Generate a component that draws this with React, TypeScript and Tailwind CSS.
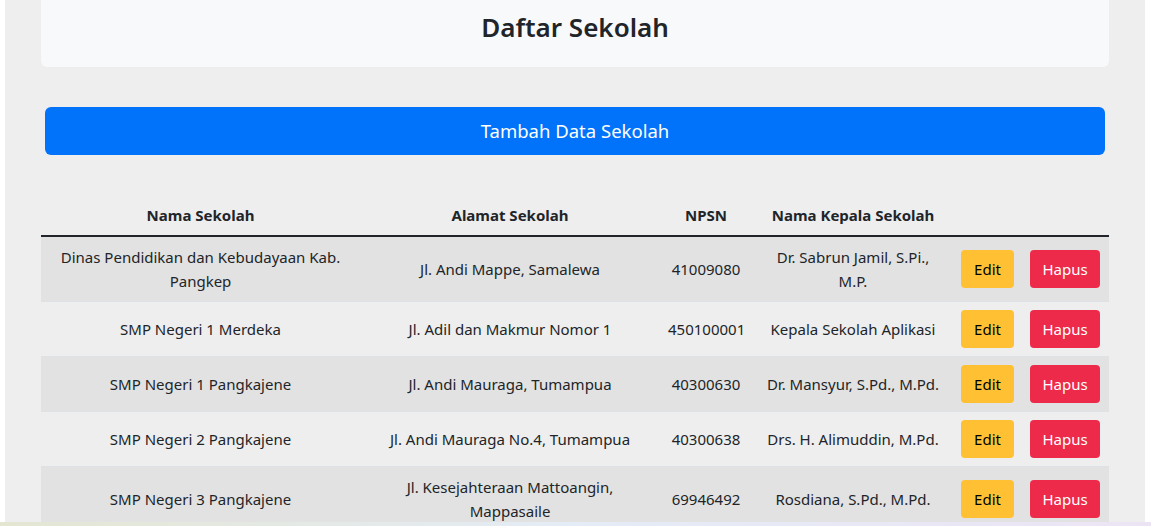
import React from 'react';

type Sekolah = {
  nama: string;
  alamat: string;
  npsn: string;
  kepala: string;
};

const data: Sekolah[] = [
  { nama: 'Dinas Pendidikan dan Kebudayaan Kab. Pangkep', alamat: 'Jl. Andi Mappe, Samalewa', npsn: '41009080', kepala: 'Dr. Sabrun Jamil, S.Pi., M.P.' },
  { nama: 'SMP Negeri 1 Merdeka', alamat: 'Jl. Adil dan Makmur Nomor 1', npsn: '450100001', kepala: 'Kepala Sekolah Aplikasi' },
  { nama: 'SMP Negeri 1 Pangkajene', alamat: 'Jl. Andi Mauraga, Tumampua', npsn: '40300630', kepala: 'Dr. Mansyur, S.Pd., M.Pd.' },
  { nama: 'SMP Negeri 2 Pangkajene', alamat: 'Jl. Andi Mauraga No.4, Tumampua', npsn: '40300638', kepala: 'Drs. H. Alimuddin, M.Pd.' },
  { nama: 'SMP Negeri 3 Pangkajene', alamat: 'Jl. Kesejahteraan Mattoangin, Mappasaile', npsn: '69946492', kepala: 'Rosdiana, S.Pd., M.Pd.' },
];

const App = () => {
  return (
    <div className="h-[526px] overflow-hidden bg-white font-['Noto_Sans',sans-serif] text-[#212529]">
      <div className="ml-[5px] h-[522px] w-[1140px] overflow-hidden bg-[#eeeeee] px-9">
        {/* Judul */}
        <div className="flex h-[67px] justify-center rounded-b-md bg-[#f8f9fa] pt-[9px]">
          <h1 className="text-[26px] font-semibold leading-[36px]">Daftar Sekolah</h1>
        </div>

        <button className="mx-1 mt-10 flex h-12 w-[1060px] items-center justify-center rounded-md bg-[#0073fa] text-[18.5px] text-white">
          Tambah Data Sekolah
        </button>

        {/* Tabel sekolah */}
        <table className="mt-[40px] w-full table-fixed border-collapse text-center text-[15px]">
          <colgroup>
            <col className="w-[319px]" />
            <col className="w-[300px]" />
            <col className="w-[92px]" />
            <col className="w-[202px]" />
            <col className="w-[155px]" />
          </colgroup>
          <thead>
            <tr className="border-b-2 border-[#212529]">
              <th className="px-2 py-2 leading-6 font-bold">Nama Sekolah</th>
              <th className="px-2 py-2 leading-6 font-bold">Alamat Sekolah</th>
              <th className="px-2 py-2 leading-6 font-bold">NPSN</th>
              <th className="px-2 py-2 leading-6 font-bold">Nama Kepala Sekolah</th>
              <th className="px-2 py-2"></th>
            </tr>
          </thead>
          <tbody>
            {data.map((s, i) => (
              <tr key={s.npsn} className={i % 2 === 0 ? 'border-b border-[#dee2e6] bg-[#e2e2e2]' : 'border-b border-[#dee2e6]'}>
                <td className="px-2 py-2 leading-6">{s.nama}</td>
                <td className="px-2 py-2 leading-6">{s.alamat}</td>
                <td className="px-2 py-2 leading-6">{s.npsn}</td>
                <td className="px-2 py-2 leading-6">
                  <div className="mx-auto max-w-[178px]">{s.kepala}</div>
                </td>
                <td className="py-2 pl-[7px] pr-2">
                  <div className="flex gap-4">
                    <button className="h-[38px] w-[53px] rounded bg-[#ffc133] text-[15px] text-black">Edit</button>
                    <button className="h-[38px] w-[70px] rounded bg-[#ee2a4a] text-[15px] text-white">Hapus</button>
                  </div>
                </td>
              </tr>
            ))}
          </tbody>
        </table>
      </div>
      <div className="h-1 bg-gradient-to-r from-[#e4e6d2] via-[#e4ecf6] to-[#ece4f4]" />
    </div>
  );
};

export default App;
